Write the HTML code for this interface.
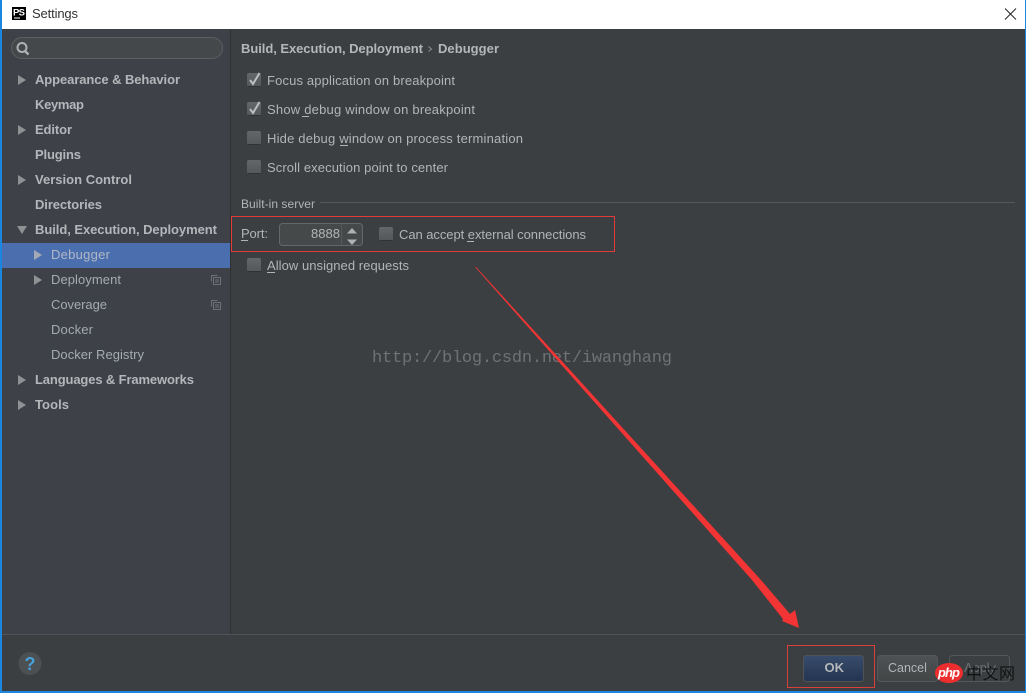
<!DOCTYPE html>
<html><head><meta charset="utf-8"><title>Settings</title>
<style>
html,body{margin:0;padding:0;background:#3c3f41;width:1026px;height:693px;overflow:hidden}
svg{display:block}
text{font-family:"Liberation Sans","Noto Sans CJK SC",sans-serif;font-size:13px;fill:#b2b4b6}
.b{font-weight:bold;fill:#b4b7b9}
.s{fill:#a4abb3}
</style></head><body>
<svg width="1026" height="693" viewBox="0 0 1026 693" xmlns="http://www.w3.org/2000/svg">
<defs>
<linearGradient id="ok" x1="0" y1="0" x2="0" y2="1"><stop offset="0" stop-color="#384c6b"/><stop offset="1" stop-color="#233450"/></linearGradient>
<linearGradient id="cb" x1="0" y1="0" x2="0" y2="1"><stop offset="0" stop-color="#646769"/><stop offset="1" stop-color="#54575a"/></linearGradient>
<linearGradient id="can" x1="0" y1="0" x2="0" y2="1"><stop offset="0" stop-color="#4e5254"/><stop offset="1" stop-color="#424647"/></linearGradient>
<g id="chk"><rect x="0" y="0" width="14" height="14" rx="2" fill="url(#cb)"/><path d="M0.5 13.5h13" stroke="#303234"/></g>
<g id="copy" fill="none" stroke="#6e7173" stroke-width="1"><path d="M0.5 6.5v-6h6"/><rect x="2.5" y="2.5" width="7" height="7"/><path d="M4 5h4M4 7h4"/></g>
</defs>

<rect width="1026" height="693" fill="#3c3f41"/>
<!-- sidebar -->
<rect x="2" y="29" width="228" height="605" fill="#3e4148"/>
<rect x="230" y="29" width="1" height="605" fill="#2e3032"/>
<rect x="2" y="243" width="228" height="25" fill="#4b6eaf"/>
<!-- title bar -->
<rect width="1026" height="29" fill="#ffffff"/>
<rect x="12" y="7" width="14" height="13" fill="#000"/>
<text x="13" y="15.500" style="font-size:9.500px;font-weight:bold;fill:#fff" textLength="12">PS</text>
<rect x="14" y="17.500" width="6" height="1" fill="#fff"/>
<text x="32" y="18" style="font-size:13px;fill:#333" textLength="46">Settings</text>
<path d="M1005 8.500l11 11M1016 8.500l-11 11" stroke="#222" stroke-width="1" fill="none"/>

<!-- search -->
<rect x="11.500" y="37.500" width="211" height="21" rx="10.500" fill="#45484a" stroke="#5c5f61"/>
<circle cx="22" cy="47.500" r="4.500" fill="none" stroke="#aeb1b3" stroke-width="2"/>
<path d="M25 51l3.500 3.500" stroke="#aeb1b3" stroke-width="2.400"/>

<!-- tree -->
<path d="M18 75l8 5-8 5z" fill="#8f9294"/>
<text class="b" x="35" y="84" textLength="145">Appearance &amp; Behavior</text>
<text class="b" x="35" y="109" textLength="49">Keymap</text>
<path d="M18 125l8 5-8 5z" fill="#8f9294"/>
<text class="b" x="35" y="134" textLength="37">Editor</text>
<text class="b" x="35" y="159" textLength="46">Plugins</text>
<path d="M18 175l8 5-8 5z" fill="#8f9294"/>
<text class="b" x="35" y="184" textLength="97">Version Control</text>
<text class="b" x="35" y="209" textLength="67">Directories</text>
<path d="M17 226h10l-5 8z" fill="#8f9294"/>
<text class="b" x="35" y="234" textLength="182">Build, Execution, Deployment</text>
<path d="M34 250l8 5-8 5z" fill="#a4aab5"/>
<text class="s" x="51" y="259" textLength="59" style="fill:#b0b8c5">Debugger</text>
<path d="M34 275l8 5-8 5z" fill="#8f9294"/>
<text class="s" x="51" y="284" textLength="70">Deployment</text>
<use href="#copy" x="211" y="275"/>
<text class="s" x="51" y="309" textLength="56">Coverage</text>
<use href="#copy" x="211" y="300"/>
<text class="s" x="51" y="334" textLength="42">Docker</text>
<text class="s" x="51" y="359" textLength="93">Docker Registry</text>
<path d="M18 375l8 5-8 5z" fill="#8f9294"/>
<text class="b" x="35" y="384" textLength="159">Languages &amp; Frameworks</text>
<path d="M18 400l8 5-8 5z" fill="#8f9294"/>
<text class="b" x="35" y="409" textLength="34">Tools</text>

<!-- header -->
<text class="b" x="241" y="53" textLength="182">Build, Execution, Deployment</text>
<path d="M428.500 46.500l3 2.500-3 2.500" stroke="#8f9294" fill="none"/>
<text class="b" x="438" y="53" textLength="61">Debugger</text>

<!-- options -->
<use href="#chk" x="247" y="73"/>
<path d="M250 80l3 4 6.500-11" stroke="#bcbec0" stroke-width="2" fill="none"/>
<text x="267" y="85" textLength="188">Focus application on breakpoint</text>
<use href="#chk" x="247" y="102"/>
<path d="M250 109l3 4 6.500-11" stroke="#bcbec0" stroke-width="2" fill="none"/>
<text x="267" y="114" textLength="208">Show debug window on breakpoint</text>
<rect x="302" y="116" width="7" height="1" fill="#b2b4b6"/>
<use href="#chk" x="247" y="131"/>
<text x="267" y="143" textLength="256">Hide debug window on process termination</text>
<rect x="340" y="145" width="8" height="1" fill="#b2b4b6"/>
<use href="#chk" x="247" y="160"/>
<text x="267" y="172" textLength="181">Scroll execution point to center</text>

<!-- built-in server -->
<text x="241" y="208" textLength="74" style="font-size:12px">Built-in server</text>
<rect x="320" y="202" width="695" height="1" fill="#55585a"/>
<text x="241" y="238" textLength="27">Port:</text>
<rect x="241" y="240" width="7" height="1" fill="#b2b4b6"/>
<rect x="279.500" y="223.500" width="83" height="22" rx="3" fill="#45494a" stroke="#646769"/>
<path d="M341.500 224v21" stroke="#55585a"/>
<text x="311" y="238" textLength="29">8888</text>
<path d="M352 228l5 5.500h-10z M352 245l5-5.500h-10z" fill="#aeb0b2"/>
<use href="#chk" x="379" y="227"/>
<text x="399" y="239" textLength="187">Can accept external connections</text>
<rect x="467" y="241" width="7" height="1" fill="#b2b4b6"/>
<use href="#chk" x="247" y="258"/>
<text x="267" y="270" textLength="142">Allow unsigned requests</text>
<rect x="267" y="272" width="8" height="1" fill="#b2b4b6"/>

<!-- watermark -->
<text x="372" y="362" textLength="300" style="font-family:'Liberation Mono',monospace;font-size:17px;fill:#6f7273">http://blog.csdn.net/iwanghang</text>

<!-- red outlines -->
<rect x="231.500" y="216.500" width="383" height="35" fill="none" stroke="#e53a3a"/>

<!-- arrow -->
<polygon points="475,267 476,267 570,370 761,580 790,614 795,610 799,628 782,621 783,619 752,580 566,370" fill="#f23434"/>

<!-- footer -->
<rect x="2" y="634" width="1024" height="1" fill="#505355"/>
<circle cx="30" cy="663.500" r="11.500" fill="#4c5052"/>
<text x="30" y="670" text-anchor="middle" style="font-size:18px;font-weight:bold;fill:#479fd8">?</text>

<rect x="803.500" y="655.500" width="60" height="26" rx="3" fill="url(#ok)" stroke="#4f5356"/>
<text x="824.500" y="672" style="font-weight:bold;font-size:13px;fill:#b4b7b9">OK</text>
<rect x="787.500" y="645.500" width="87" height="42" fill="none" stroke="#d9403a"/>
<rect x="877.500" y="655.500" width="60" height="26" rx="3" fill="url(#can)" stroke="#55585a"/>
<text x="888" y="672" style="font-size:12.500px">Cancel</text>
<rect x="949.500" y="655.500" width="60" height="26" rx="3" fill="none" stroke="#55585a"/>
<text x="964" y="672" textLength="32" style="fill:#6d7072">Apply</text>

<!-- php watermark -->
<ellipse cx="949" cy="673" rx="14" ry="10" fill="#ee2e2e"/>
<text x="938" y="677" textLength="22" style="font-size:13px;font-weight:bold;font-style:italic;fill:#fff">php</text>
<text x="966" y="679" textLength="49" style="font-family:'Noto Sans CJK SC',sans-serif;font-size:16px;fill:#111">中文网</text>

<!-- window border -->
<rect x="0" y="0" width="2" height="693" fill="#1b86e0"/>
<rect x="0" y="691" width="1026" height="2" fill="#1b86e0"/>
<rect x="1025" y="0" width="1" height="693" fill="#1b86e0"/>
</svg>
</body></html>
